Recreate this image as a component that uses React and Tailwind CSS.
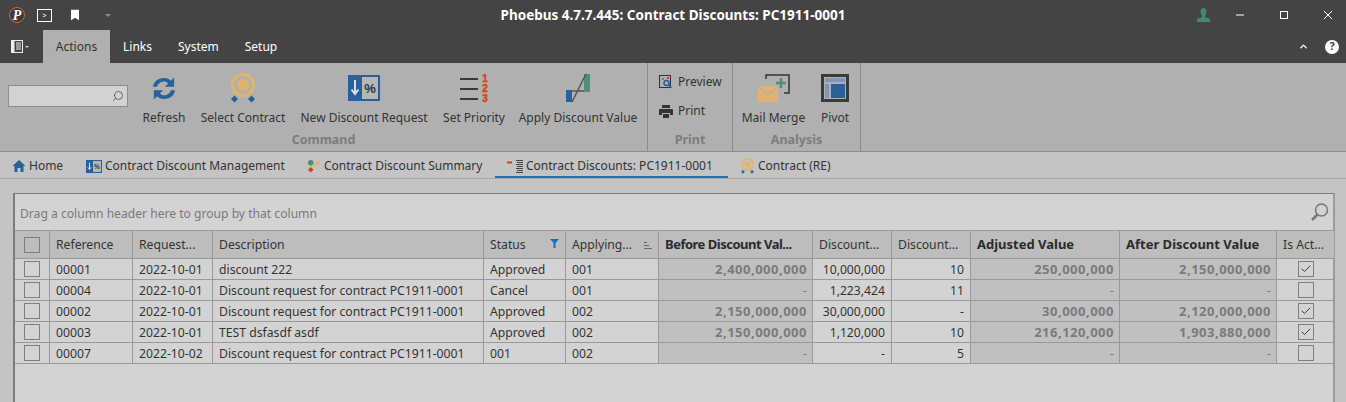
import { Check, ChevronUp, Search } from 'lucide-react'

const font = 'font-["Noto_Sans",sans-serif]'

const COLUMNS = [
  { key: 'ref', label: 'Reference' },
  { key: 'date', label: 'Request...' },
  { key: 'desc', label: 'Description' },
  { key: 'status', label: 'Status', filter: true },
  { key: 'apply', label: 'Applying...', sort: true },
  { key: 'before', label: 'Before Discount Val...', calc: true, labelClass: 'text-[13px] tracking-[-0.5px]' },
  { key: 'dv', label: 'Discount...', right: true },
  { key: 'dp', label: 'Discount...', right: true },
  { key: 'adj', label: 'Adjusted Value', calc: true, labelClass: 'text-[13px]' },
  { key: 'after', label: 'After Discount Value', calc: true, labelClass: 'text-[13px]' },
]

const ROWS = [
  { ref: '00001', date: '2022-10-01', desc: 'discount 222', status: 'Approved', apply: '001', before: '2,400,000,000', dv: '10,000,000', dp: '10', adj: '250,000,000', after: '2,150,000,000', active: true },
  { ref: '00004', date: '2022-10-01', desc: 'Discount request for contract PC1911-0001', status: 'Cancel', apply: '001', before: '-', dv: '1,223,424', dp: '11', adj: '-', after: '-', active: false },
  { ref: '00002', date: '2022-10-01', desc: 'Discount request for contract PC1911-0001', status: 'Approved', apply: '002', before: '2,150,000,000', dv: '30,000,000', dp: '-', adj: '30,000,000', after: '2,120,000,000', active: true },
  { ref: '00003', date: '2022-10-01', desc: 'TEST dsfasdf asdf', status: 'Approved', apply: '002', before: '2,150,000,000', dv: '1,120,000', dp: '10', adj: '216,120,000', after: '1,903,880,000', active: true },
  { ref: '00007', date: '2022-10-02', desc: 'Discount request for contract PC1911-0001', status: '001', apply: '002', before: '-', dv: '-', dp: '5', adj: '-', after: '-', active: false },
]

const gridCols = 'grid-cols-[35px_83px_80px_271px_82px_93px_154px_79px_79px_149px_157px_57px]'

function Box({ checked }) {
  return (
    <span className="w-4 h-4 border border-[#7f7f7f] flex items-center justify-center">
      {checked && <Check size={12} strokeWidth={1.800} className="text-[#2b2b2b]" />}
    </span>
  )
}

function RefreshIcon() {
  return (
    <svg width="24" height="25" viewBox="0 0 26 26" fill="#27609b">
      <path d="M1 11C2 5 7 1.500 13 1.500c3 0 5.500 1 7.500 3L24 1v10H14l3.500-3.500C16 6 14.500 5.500 13 5.500 9.500 5.500 6.500 7.800 5.500 11z" />
      <path d="M25 15c-1 6-6 9.500-12 9.500-3 0-5.500-1-7.500-3L2 25V15h10l-3.500 3.500C10 20 11.500 20.500 13 20.500c3.500 0 6.500-2.300 7.500-5.500z" />
    </svg>
  )
}

function AwardIcon({ w = 24, h = 30 }) {
  return (
    <svg width={w} height={h} viewBox="0 0 24 30" fill="none">
      <circle cx="12" cy="12" r="10.500" stroke="#e2b36c" strokeWidth="3" />
      <circle cx="12" cy="12" r="6" fill="#e2b36c" />
      <path d="M0 26l3.500-3.500L7 26l-3.500 3.500zM17 26l3.500-3.500L24 26l-3.500 3.500z" fill="#27609b" />
    </svg>
  )
}

function PercentIcon({ w = 32, h = 26 }) {
  return (
    <svg width={w} height={h} viewBox="0 0 32 26">
      <rect width="32" height="26" fill="#27609b" />
      <rect x="14" y="2" width="16" height="22" fill="#b6b6b6" />
      <path d="M7 5v13M3.500 14.500L7 19l3.500-4.500" stroke="#ddd" strokeWidth="2" fill="none" />
      <text x="22" y="18" textAnchor="middle" fontSize="13" fontWeight="700" fontFamily="Liberation Sans" fill="#333">%</text>
    </svg>
  )
}

function PriorityIcon() {
  return (
    <svg width="28" height="29" viewBox="0 0 28 29">
      <path d="M0 5h18M0 15h18M0 25h18" stroke="#3a3a3a" strokeWidth="2" />
      <g fontSize="10" fontWeight="700" fontFamily="Liberation Sans" fill="#d9400f" stroke="#d9400f" strokeWidth="0.400" textAnchor="middle">
        <text x="25" y="8">1</text>
        <text x="25" y="18">2</text>
        <text x="25" y="28">3</text>
      </g>
    </svg>
  )
}

function ApplyIcon() {
  return (
    <svg width="24" height="28" viewBox="0 0 24 28">
      <rect x="18" y="0" width="6" height="18" fill="#4d9079" />
      <rect x="0" y="16" width="6" height="12" fill="#27609b" />
      <path d="M6 17h12M6 28L20 0" stroke="#555" strokeWidth="1.500" fill="none" />
    </svg>
  )
}

function MailIcon() {
  return (
    <svg width="32" height="28" viewBox="0 0 32 28" fill="none">
      <path d="M8 5V1h23v18h-5" stroke="#333" strokeWidth="1.500" />
      <path d="M23 4v10M18 9h10" stroke="#4d9079" strokeWidth="2.500" />
      <rect x="0" y="12" width="20" height="16" fill="#e2b36c" />
      <path d="M0 13l10 7 10-7" stroke="#b0b0b0" strokeWidth="1.500" />
    </svg>
  )
}

function PivotIcon() {
  return (
    <svg width="28" height="28" viewBox="0 0 28 28">
      <rect x="1.500" y="1.500" width="25" height="25" fill="none" stroke="#3a3a3a" strokeWidth="3" />
      <rect x="4" y="4" width="20" height="4" fill="#7c98b8" />
      <rect x="4" y="10" width="4" height="14" fill="#7c98b8" />
      <rect x="10" y="10" width="14" height="14" fill="#27609b" />
    </svg>
  )
}

function BigButton({ label, width, icon }) {
  return (
    <button className={`${width} flex flex-col items-center`}>
      <span className="h-[36px] flex items-center justify-center">{icon}</span>
      <span className="mt-[4px] text-[12px] leading-4 text-[#333] whitespace-nowrap">{label}</span>
    </button>
  )
}

function RibbonGroup({ title, width, children }) {
  return (
    <div className={`${width} h-full border-r border-[#8c8c8c] flex flex-col`}>
      <div className="flex-1 flex pt-[7px] min-h-0">{children}</div>
      <div className="h-[20px] text-center text-[12.500px] font-bold leading-[17px] text-[#7d7d7d]">{title}</div>
    </div>
  )
}

function DocTab({ icon, label, width, active }) {
  return (
    <div className={`${width} h-full pl-3 pt-[4px] flex items-center gap-[3px] text-[12px] text-[#333] border-b-2 ${active ? 'border-[#1f6fb8]' : 'border-transparent'}`}>
      {icon}
      <span className="whitespace-nowrap">{label}</span>
    </div>
  )
}

export default function App() {
  return (
    <div className={`h-[402px] w-[1346px] overflow-hidden flex flex-col bg-[#c4c4c4] ${font}`}>
      {/* title bar */}
      <div className="h-[30px] bg-[#444444] flex items-center shrink-0">
        <div className="w-[200px] pl-[9px] flex items-center">
          <svg width="16" height="16" viewBox="0 0 16 16">
            <circle cx="8" cy="8" r="7.500" fill="#3a3a3a" stroke="#d9691e" strokeWidth="1" />
            <text x="8" y="12.500" textAnchor="middle" fontSize="14" fontWeight="700" fontStyle="italic" fontFamily="Liberation Serif" fill="#fff">P</text>
          </svg>
          <span className="ml-[12px] w-[15px] h-[13px] border border-white flex items-center justify-center text-[7px] leading-none text-white">&gt;</span>
          <svg className="ml-[19px]" width="8" height="12" viewBox="0 0 9 12"><path d="M0 0h9v12L4.500 9 0 12z" fill="#fff" /></svg>
          <svg className="ml-[26px]" width="6" height="3" viewBox="0 0 6 3"><path d="M0 0h6L3 3z" fill="#8a8a8a" /></svg>
        </div>
        <div className="flex-1 text-center text-white font-bold text-[13.500px]">Phoebus 4.7.7.445: Contract Discounts: PC1911-0001</div>
        <div className="w-[200px] flex items-center justify-end text-white">
          <svg width="13" height="14" viewBox="0 0 13 14"><path d="M6.500 0C8.500 0 9.500 1.500 9.500 3.500S8.500 7 8 7.500V9l5 2v3H0v-3l5-2V7.500C4.500 7 3.500 5.500 3.500 3.500S4.500 0 6.500 0z" fill="#3f8a70" /></svg>
          <svg className="ml-[26px]" width="8" height="8" viewBox="0 0 8 8"><path d="M0 4h8" stroke="#fff" /></svg>
          <svg className="ml-[36px]" width="8" height="8" viewBox="0 0 8 8"><rect x="0.500" y="0.500" width="7" height="7" fill="none" stroke="#fff" /></svg>
          <svg className="ml-[36px] mr-[14px]" width="8" height="8" viewBox="0 0 8 8"><path d="M0 0l8 8M8 0L0 8" stroke="#fff" /></svg>
        </div>
      </div>

      {/* menu tabs */}
      <div className="h-[33px] bg-[#444444] flex items-stretch shrink-0 text-[12px]">
        <div className="w-[43px] pl-[11px] flex items-center">
          <svg width="12" height="13" viewBox="0 0 12 13"><rect x="0.500" y="0.500" width="11" height="12" fill="none" stroke="#eee" /><path d="M0 0h3v13H0zM5 3h5M5 5h5M5 7h5M5 9h5" stroke="#eee" fill="#eee" /></svg>
          <svg className="ml-[2px]" width="4" height="2" viewBox="0 0 4 2"><path d="M0 0h4L2 2z" fill="#ccc" /></svg>
        </div>
        <div className="w-[67px] bg-[#b0b0b0] text-[#333] flex items-center justify-center">Actions</div>
        <div className="ml-[13px] text-white flex items-center">Links</div>
        <div className="ml-[26px] text-white flex items-center">System</div>
        <div className="ml-[26px] text-white flex items-center">Setup</div>
        <div className="flex-1" />
        <div className="flex items-center text-white pr-[7px]">
          <ChevronUp size={11} strokeWidth={3} />
          <span className="ml-[16px] w-[14px] h-[14px] rounded-full bg-white text-[#444] text-[11px] font-bold flex items-center justify-center">?</span>
        </div>
      </div>

      {/* ribbon */}
      <div className="h-[89px] bg-[#b0b0b0] border-b border-[#8c8c8c] flex shrink-0">
        <RibbonGroup title="Command" width="w-[648px]">
          <div className="w-[135px] pl-2 pt-[15px]">
            <div className="w-[120px] h-[22px] bg-[#d2d2d2] border border-[#8c8c8c] flex items-center justify-end pr-[3px]">
              <Search size={12} strokeWidth={1.500} className="text-[#444] -scale-x-100" />
            </div>
          </div>
          <BigButton label="Refresh" width="w-[58px]" icon={<RefreshIcon />} />
          <BigButton label="Select Contract" width="w-[100px]" icon={<AwardIcon />} />
          <BigButton label="New Discount Request" width="w-[142px]" icon={<PercentIcon />} />
          <BigButton label="Set Priority" width="w-[78px]" icon={<PriorityIcon />} />
          <BigButton label="Apply Discount Value" width="w-[130px]" icon={<ApplyIcon />} />
        </RibbonGroup>
        <RibbonGroup title="Print" width="w-[85px]">
          <div className="pl-[11px] flex flex-col gap-[13px] pt-[4px]">
            <div className="flex items-center gap-[5px] text-[12px] leading-4 text-[#333]">
              <svg width="14" height="14" viewBox="0 0 14 14" fill="none">
                <rect x="0.500" y="0.500" width="11" height="12" stroke="#333" />
                <circle cx="7.500" cy="8" r="2.500" stroke="#27609b" strokeWidth="1.500" />
                <path d="M9.500 10l3 3" stroke="#27609b" strokeWidth="1.500" />
                <path d="M3 3h2v2H3z" fill="#4d9079" /><path d="M8 2h2v2H8z" fill="#d9400f" />
              </svg>
              Preview
            </div>
            <div className="flex items-center gap-[5px] text-[12px] leading-4 text-[#333]">
              <svg width="14" height="13" viewBox="0 0 14 13"><path d="M3 0h8v3H3zM1 4h12a1 1 0 0 1 1 1v5h-3V8H3v2H0V5a1 1 0 0 1 1-1zM4 9h6v4H4z" fill="#333" /></svg>
              Print
            </div>
          </div>
        </RibbonGroup>
        <RibbonGroup title="Analysis" width="w-[128px]">
          <BigButton label="Mail Merge" width="w-[81px]" icon={<MailIcon />} />
          <BigButton label="Pivot" width="w-[42px]" icon={<PivotIcon />} />
        </RibbonGroup>
      </div>

      {/* document tabs */}
      <div className="h-[27px] bg-[#c4c4c4] border-b border-[#a8a8a8] flex shrink-0">
        <DocTab width="w-[74px]" label="Home" icon={<svg width="14" height="12" viewBox="0 0 13 12"><path d="M6.500 0L13 6h-2v6H8V8H5v4H2V6H0z" fill="#27609b" /></svg>} />
        <DocTab width="w-[221px]" label="Contract Discount Management" icon={<PercentIcon w={16} h={13} />} />
        <DocTab width="w-[200px]" label="Contract Discount Summary" icon={
          <svg width="14" height="15" viewBox="0 0 15 15"><circle cx="4" cy="3.500" r="3" fill="#4d9079" /><path d="M11 1l3.500 5h-7z" fill="#e2b36c" /><path d="M4 8l3 3-3 3-3-3z" fill="#d9400f" /></svg>
        } />
        <DocTab active width="w-[233px]" label="Contract Discounts: PC1911-0001" icon={
          <svg width="16" height="13" viewBox="0 0 16 13"><path d="M0 2.500h5" stroke="#d9400f" strokeWidth="2" /><path d="M9 .5h7M10 2.500h6M9 4.500h7M10 6.500h6M9 8.500h7M10 10.500h6M9 12.500h7" stroke="#444" /></svg>
        } />
        <DocTab width="w-[120px]" label="Contract (RE)" icon={<AwardIcon w={15} h={16} />} />
      </div>

      {/* grid panel */}
      <div className="flex-1 pt-[14px] px-[13px] min-h-0">
        <div className="h-full bg-[#d3d3d3] border-t border-x-2 border-[#7c7c7c] border-r-[#9a9a9a] w-[1322px]">
          <div className="h-[36px] flex items-center justify-between pl-[5px] pr-[3px] text-[12.120px] text-[#7a7a7a]">
            <span className="pt-[4px]">Drag a column header here to group by that column</span>
            <svg width="20" height="20" viewBox="0 0 20 20" fill="none">
              <circle cx="11.500" cy="8" r="6" stroke="#777" strokeWidth="1.500" />
              <path d="M7.500 12.500L2 18" stroke="#777" strokeWidth="2.500" />
            </svg>
          </div>
          <div className={`grid ${gridCols} w-[1319px] border-t border-[#999] text-[12.200px] text-[#333]`}>
            <div className="h-[28px] bg-[#bdbdbd] border-r border-b border-[#999] flex items-center justify-center"><Box /></div>
            {COLUMNS.map((c) => (
              <div key={c.key + c.label} className={`h-[28px] bg-[#bdbdbd] border-r border-b border-[#999] flex items-center justify-between px-[6px] whitespace-nowrap ${c.calc ? 'font-bold text-[#2b2b2b]' : 'pt-[2px]'}`}>
                <span className={c.labelClass}>{c.label}</span>
                {c.filter && <svg className="mb-[5px]" width="9" height="9" viewBox="0 0 9 9"><path d="M0 0h9L5.500 4v5h-2V4z" fill="#1f6fb8" /></svg>}
                {c.sort && <svg width="8" height="7" viewBox="0 0 8 7"><path d="M0 .5h3M0 3.500h5M0 6.500h8" stroke="#666" /></svg>}
              </div>
            ))}
            <div className="h-[28px] bg-[#bdbdbd] border-b border-[#999] flex items-center pl-[6px] pt-[2px] whitespace-nowrap">Is Act...</div>
            {ROWS.map((r) => (
              <div key={r.ref} className="contents">
                <div className="h-[21px] border-r border-b border-[#999] flex items-center justify-center"><Box /></div>
                {COLUMNS.map((c) => (
                  <div key={c.key} className={`h-[21px] border-r border-b border-[#999] pt-[2px] flex items-center whitespace-nowrap ${c.calc ? 'bg-[#c0c0c0] text-[#7b7b7b] justify-end pl-[6px] pr-[5px]' : 'px-[6px]'} ${c.right ? 'justify-end' : ''}`}>
                    {c.calc && r[c.key] !== '-' ? <span className="font-bold text-[13px] tracking-[0.5px]">{r[c.key]}</span> : r[c.key]}
                  </div>
                ))}
                <div className="h-[21px] border-b border-[#999] flex items-center justify-center"><Box checked={r.active} /></div>
              </div>
            ))}
          </div>
        </div>
      </div>
    </div>
  )
}
